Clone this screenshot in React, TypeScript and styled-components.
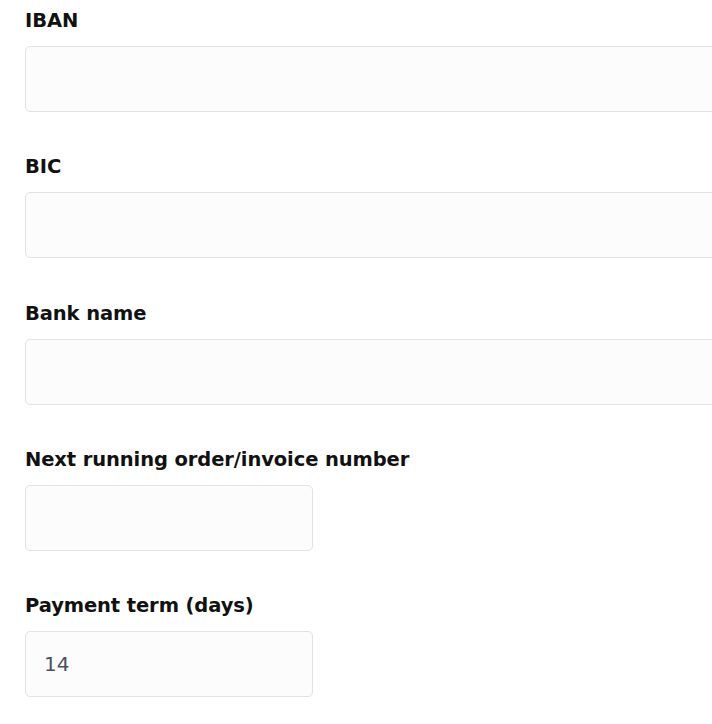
import styled, { createGlobalStyle } from 'styled-components';

const GlobalStyle = createGlobalStyle`
    html, body { margin:0; padding:0; background:#fff; overflow:hidden; }
    body { font-family: "DejaVu Sans", "Noto Sans", sans-serif; }
`;

const Form = styled.form`
    display:flex;flex-direction:column;
    padding:9px 0 0 25px;width:820px;box-sizing:border-box;
`;

const Field = styled.div`
    display:flex;flex-direction:column;gap:13px;margin-bottom:43.3px;
`;

const Label = styled.label`
    font-size:19.5px;line-height:24px;font-weight:700;color:#111;letter-spacing:-0.1px;
`;

const Input = styled.input<{ $short?: boolean }>`
    width:${({ $short }) => ($short ? '288px' : '100%')};height:66px;box-sizing:border-box;
    background:#fcfcfc;border:1px solid #e2e2e2;border-radius:5px;
    padding:0 18px;font-family:inherit;font-size:20px;color:#4a5160;outline:none;
`;

const fields = [
    { id: 'iban', label: 'IBAN', value: '' },
    { id: 'bic', label: 'BIC', value: '' },
    { id: 'bank', label: 'Bank name', value: '' },
    { id: 'next', label: 'Next running order/invoice number', value: '', short: true },
    { id: 'term', label: 'Payment term (days)', value: '14', short: true },
];

const App = () => {
    return <>
        <GlobalStyle />
        <Form>
            {fields.map(f => <Field key={f.id}>
                <Label htmlFor={f.id}>{f.label}</Label>
                <Input id={f.id} $short={f.short} defaultValue={f.value} />
            </Field>)}
        </Form>
    </>
}

export default App;
